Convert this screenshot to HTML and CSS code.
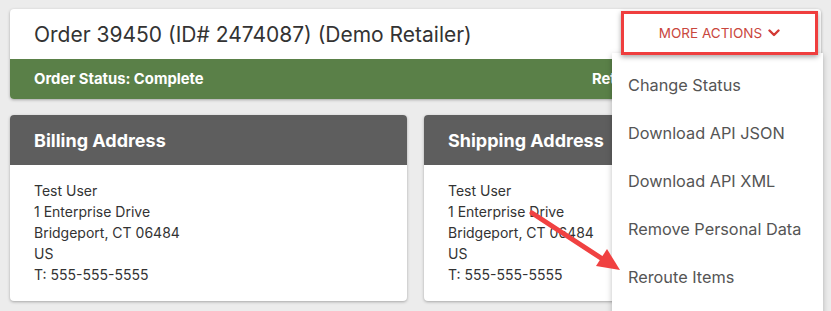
FILE: index.html
```
<!DOCTYPE html>
<html>
  <head>
    <meta charset="UTF-8">
    <title>Order 39450</title>
    <link rel="stylesheet" href="styles.css">
  </head>
  <body>
    <div class="orderCard">
      <div class="orderHead">
        <h1 class="orderTitle">Order 39450 (ID# 2474087) (Demo Retailer)</h1>
        <div class="actions">
          <button class="actionsButton">MORE ACTIONS
            <svg class="chevron" width="12" height="8" viewBox="0 0 12 8"><path d="M1.5 1.5 L6 6 L10.5 1.5" fill="none" stroke="currentColor" stroke-width="2.4" stroke-linecap="round" stroke-linejoin="round"/></svg>
          </button>
          <ul class="actionsMenu">
            <li>Change Status</li>
            <li>Download API JSON</li>
            <li>Download API XML</li>
            <li>Remove Personal Data</li>
            <li>Reroute Items</li>
          </ul>
        </div>
      </div>
      <div class="statusBar">
        <span>Order Status: Complete</span>
        <span class="retailer">Retailer: Demo Retailer</span>
      </div>
    </div>

    <div class="addresses">
      <div class="addressCard">
        <div class="addressHead">Billing Address</div>
        <div class="addressBody">
          Test User<br>
          1 Enterprise Drive<br>
          Bridgeport, CT 06484<br>
          US<br>
          T: 555-555-5555
        </div>
      </div>
      <div class="addressCard">
        <div class="addressHead">Shipping Address</div>
        <div class="addressBody">
          Test User<br>
          1 Enterprise Drive<br>
          Bridgeport, CT 06484<br>
          US<br>
          T: 555-555-5555
        </div>
      </div>
    </div>

    <!-- annotation arrow -->
    <svg class="arrow" width="831" height="311" viewBox="0 0 831 311">
      <line x1="532" y1="213" x2="604" y2="260" stroke="#f04141" stroke-width="5" stroke-linecap="round"/>
      <polygon points="620,270 596,266 607,249" fill="#f04141"/>
    </svg>
  </body>
</html>
```

FILE: styles.css
```
* {
  box-sizing: border-box;
}

body {
  margin: 0;
  padding: 9px 10px;
  background-color: #ececec;
  font-family: "Inter", "Open Sans", Arial, sans-serif;
  color: #333;
  position: relative;
  height: 311px;
  overflow: hidden;
}

.orderCard {
  background-color: #fff;
  border-radius: 4px;
  box-shadow: 0px 1px 3px rgba(0, 0, 0, 0.3);
}

.orderHead {
  height: 50px;
  padding: 0 3px 0 24px;
  display: flex;
  justify-content: space-between;
}

.orderTitle {
  margin: 0;
  align-self: center;
  font-size: 21px;
  font-weight: 400;
  color: #333;
}

.actions {
  position: relative;
  margin-top: 2px;
}

.actionsButton {
  position: relative;
  z-index: 2;
  width: 197px;
  height: 44px;
  border: 3px solid #ef3e3e;
  background-color: #fff;
  color: #c9463d;
  font-family: inherit;
  font-size: 13.5px;
  display: flex;
  align-items: center;
  justify-content: center;
  gap: 6px;
  padding: 0 0 0 0;
  box-shadow: 0px 2px 5px rgba(0, 0, 0, 0.35);
  cursor: pointer;
}

.chevron {
  color: #d33a35;
}

.actionsMenu {
  position: absolute;
  z-index: 1;
  top: 42px;
  left: -9px;
  width: 211px;
  margin: 0;
  padding: 8px 0 14px 0;
  list-style: none;
  background-color: #fff;
  box-shadow: 0px 2px 6px rgba(0, 0, 0, 0.25);
}

.actionsMenu li {
  height: 48px;
  line-height: 48px;
  padding: 0 16px;
  font-size: 16.3px;
  color: #555;
  white-space: nowrap;
}

.statusBar {
  height: 40px;
  padding: 0 24px;
  display: flex;
  align-items: center;
  justify-content: space-between;
  background-color: #5a8048;
  color: white;
  font-size: 14.8px;
  font-weight: 700;
  border-radius: 0 0 4px 4px;
}

.retailer {
  width: 205px;
  white-space: nowrap;
}

.addresses {
  margin-top: 16px;
  display: grid;
  grid-template-columns: 1fr 1fr;
  gap: 17px;
}

.addressCard {
  background-color: #fff;
  border-radius: 4px;
  overflow: hidden;
  box-shadow: 0px 1px 3px rgba(0, 0, 0, 0.3);
}

.addressHead {
  height: 50px;
  padding: 0 24px;
  display: flex;
  align-items: center;
  background-color: #5e5e5e;
  color: white;
  font-size: 18px;
  font-weight: 700;
}

.addressBody {
  padding: 15px 24px 16px 24px;
  font-size: 14px;
  line-height: 21px;
  color: #333;
}

.arrow {
  position: absolute;
  top: 0;
  left: 0;
  z-index: 5;
  pointer-events: none;
}
```
